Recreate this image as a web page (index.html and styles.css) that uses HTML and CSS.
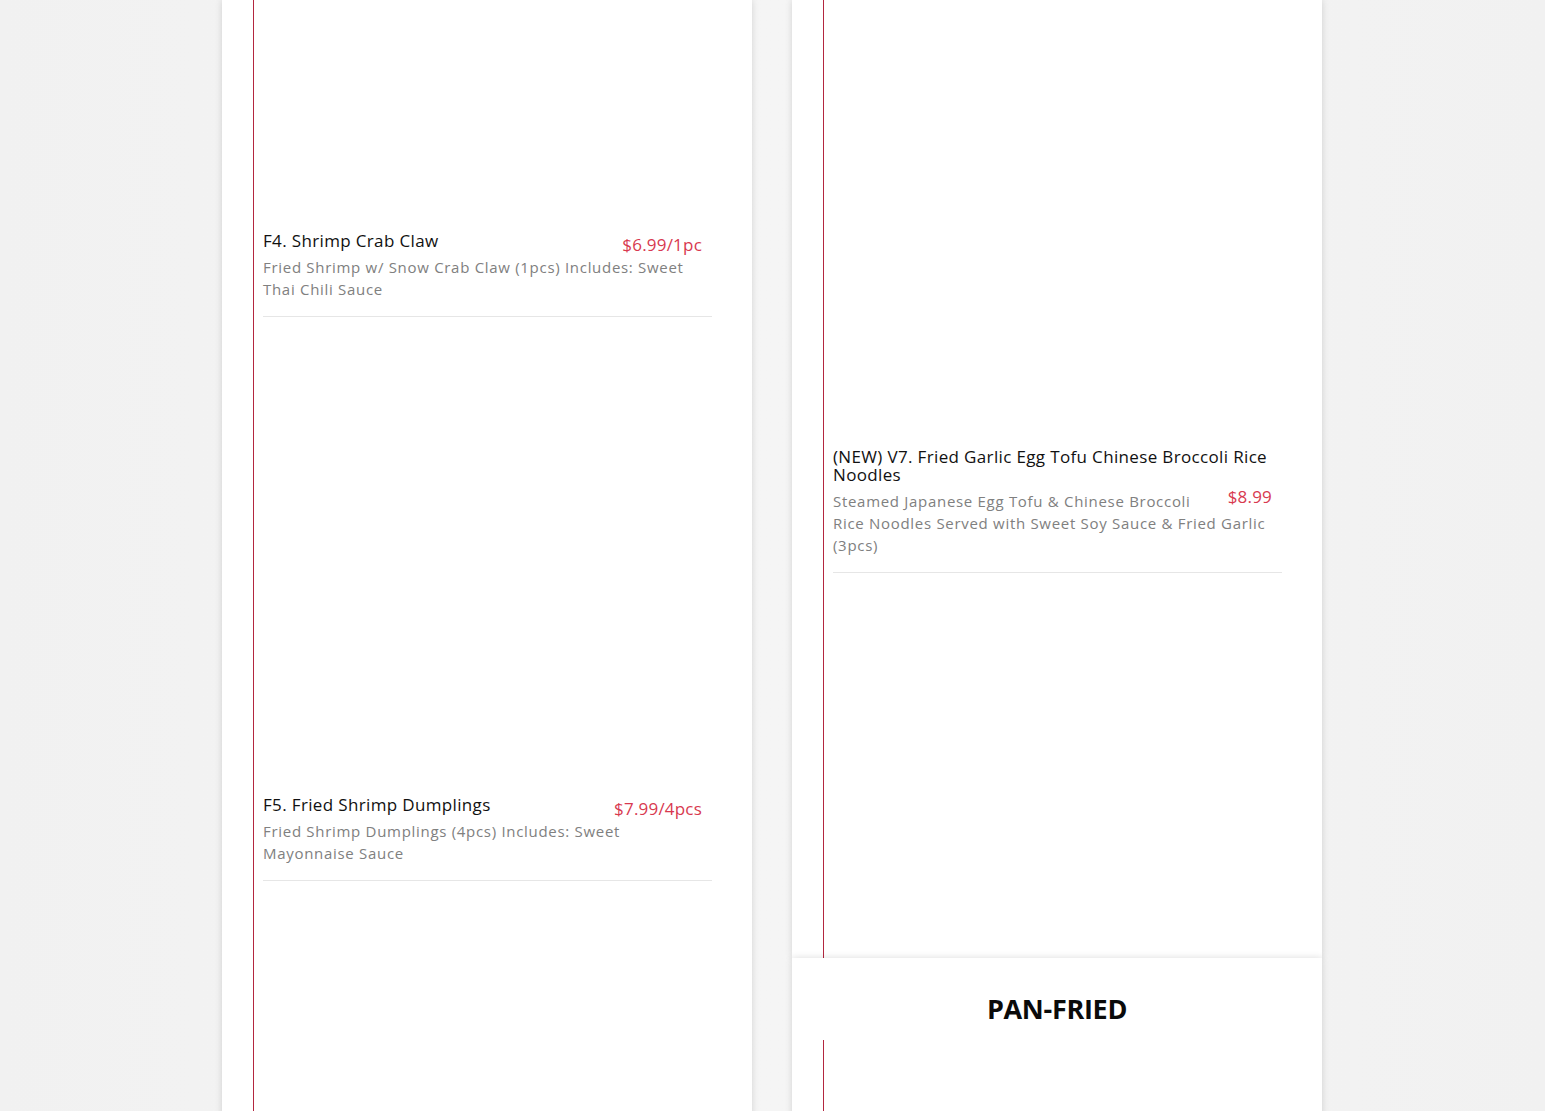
FILE: index.html
```html
<!DOCTYPE html>
<html lang="en">
<head>
  <meta charset="UTF-8" />
  <meta name="viewport" content="width=device-width, initial-scale=1.0"/>
  <title>Menu</title>
  <link rel="stylesheet" href="styles.css">
</head>
<body>
  <main class="menu">

    <div class="menu-col">
      <section class="menu-card">
        <div class="menu-list">
          <article class="menu-item">
            <div class="menu-photo menu-photo--cut-left"></div>
            <div class="menu-body">
              <h3 class="menu-name">F4. Shrimp Crab Claw</h3>
              <span class="menu-price">$6.99/1pc</span>
              <p class="menu-desc">Fried Shrimp w/ Snow Crab Claw (1pcs) Includes: Sweet Thai Chili Sauce</p>
            </div>
          </article>

          <article class="menu-item">
            <div class="menu-photo"></div>
            <div class="menu-body">
              <h3 class="menu-name">F5. Fried Shrimp Dumplings</h3>
              <span class="menu-price">$7.99/4pcs</span>
              <p class="menu-desc">Fried Shrimp Dumplings (4pcs) Includes: Sweet Mayonnaise Sauce</p>
            </div>
          </article>

          <article class="menu-item">
            <div class="menu-photo"></div>
          </article>
        </div>
      </section>
    </div>

    <div class="menu-col">
      <section class="menu-card">
        <div class="menu-list menu-list--tail">
          <article class="menu-item">
            <div class="menu-photo menu-photo--cut-right"></div>
            <div class="menu-body">
              <h3 class="menu-name">(NEW) V7. Fried Garlic Egg Tofu Chinese Broccoli Rice Noodles</h3>
              <span class="menu-price">$8.99</span>
              <p class="menu-desc">Steamed Japanese Egg Tofu &amp; Chinese Broccoli Rice Noodles Served with Sweet Soy Sauce &amp; Fried Garlic (3pcs)</p>
            </div>
          </article>
        </div>
      </section>

      <section class="menu-card">
        <h2 class="menu-heading">PAN-FRIED</h2>
        <div class="menu-list">
          <article class="menu-item">
            <div class="menu-photo"></div>
          </article>
        </div>
      </section>
    </div>

  </main>
</body>
</html>
```

FILE: styles.css
```css
body {
  margin: 0;
  background-color: #f3f3f3;
  background-image: linear-gradient(90deg, #f1f1f1, #f5f5f5 50%, #f1f1f1);
  color: #111;
  font-family: 'Open Sans', 'Liberation Sans', sans-serif;
  height: 1111px;
  overflow: hidden;
}

.menu {
  width: 1100px;
  margin-left: calc((100% - 1101px) / 2);
  display: flex;
  gap: 40px;
  align-items: flex-start;
}

.menu-col {
  width: 530px;
}

.menu-card {
  position: relative;
  background: white;
  box-shadow: 0 0 7px rgba(0,0,0,0.14);
}

.menu-list {
  margin: 0 40px 0 31px;
  border-left: 1px solid #b3263f;
  padding-left: 9px;
}

.menu-list--tail {
  padding-bottom: 385px;
}

.menu-item {
  border-bottom: 1px solid #e6e6e6;
  padding-bottom: 16px;
}

.menu-photo {
  height: 464px;
  margin-bottom: 15px;
}

.menu-photo--cut-left {
  height: 217px;
}

.menu-photo--cut-right {
  height: 433px;
}

.menu-body {
  line-height: 18px;
  padding-right: 10px;
}

.menu-name {
  display: inline-block;
  margin: 0;
  font-size: 17px;
  font-weight: 400;
  line-height: 18px;
  letter-spacing: 0.35px;
  color: #111;
}

.menu-price {
  float: right;
  margin-left: 24px;
  padding-top: 4px;
  font-size: 17px;
  letter-spacing: 0.2px;
  color: #d8394f;
}

.menu-desc {
  margin: 6px 0 0;
  font-size: 15px;
  line-height: 22px;
  letter-spacing: 0.7px;
  color: #808080;
}

.menu-heading {
  margin: 0;
  padding: 34px 0 14px;
  text-align: center;
  font-size: 27px;
  line-height: 34px;
  font-weight: 700;
  letter-spacing: -0.3px;
  color: #0a0a0a;
}
```
